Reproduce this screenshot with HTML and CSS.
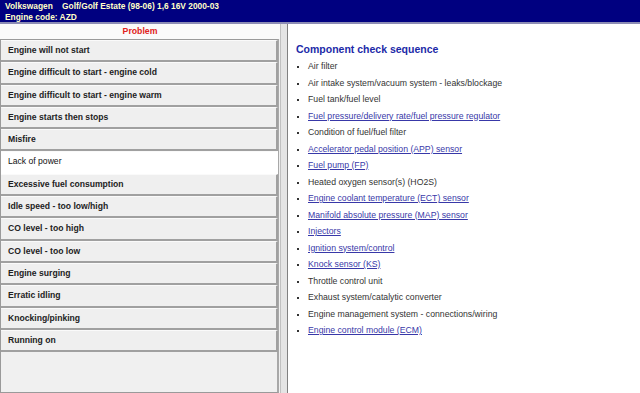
FILE: index.html
```html
<!DOCTYPE html>
<html lang="en">
<head>
  <meta charset="UTF-8">
  <title>Problem - Component check sequence</title>
  <link rel="stylesheet" href="styles.css">
</head>
<body>
  <div class="topo">
    <div>Volkswagen&nbsp;&nbsp;&nbsp; Golf/Golf Estate (98-06) 1,6 16V 2000-03</div>
    <div>Engine code: AZD</div>
  </div>
  <div class="conteudo">
    <div class="painel-esq">
      <div class="titulo-problema">Problem</div>
      <div class="lista-problemas">
        <div class="problema">Engine will not start</div>
        <div class="problema">Engine difficult to start - engine cold</div>
        <div class="problema">Engine difficult to start - engine warm</div>
        <div class="problema">Engine starts then stops</div>
        <div class="problema">Misfire</div>
        <div class="problema ativo">Lack of power</div>
        <div class="problema">Excessive fuel consumption</div>
        <div class="problema">Idle speed - too low/high</div>
        <div class="problema">CO level - too high</div>
        <div class="problema">CO level - too low</div>
        <div class="problema">Engine surging</div>
        <div class="problema">Erratic idling</div>
        <div class="problema">Knocking/pinking</div>
        <div class="problema">Running on</div>
      </div>
    </div>
    <div class="divisor"></div>
    <div class="painel-dir">
      <h2>Component check sequence</h2>
      <ul class="sequencia">
        <li>Air filter</li>
        <li>Air intake system/vacuum system - leaks/blockage</li>
        <li>Fuel tank/fuel level</li>
        <li><a href="#">Fuel pressure/delivery rate/fuel pressure regulator</a></li>
        <li>Condition of fuel/fuel filter</li>
        <li><a href="#">Accelerator pedal position (APP) sensor</a></li>
        <li><a href="#">Fuel pump (FP)</a></li>
        <li>Heated oxygen sensor(s) (HO2S)</li>
        <li><a href="#">Engine coolant temperature (ECT) sensor</a></li>
        <li><a href="#">Manifold absolute pressure (MAP) sensor</a></li>
        <li><a href="#">Injectors</a></li>
        <li><a href="#">Ignition system/control</a></li>
        <li><a href="#">Knock sensor (KS)</a></li>
        <li>Throttle control unit</li>
        <li>Exhaust system/catalytic converter</li>
        <li>Engine management system - connections/wiring</li>
        <li><a href="#">Engine control module (ECM)</a></li>
      </ul>
    </div>
  </div>
</body>
</html>
```
FILE: styles.css
```css
html, body {
  margin: 0;
  height: 100%;
  overflow: hidden;
}
body {
  font-family: "Liberation Sans", Arial, sans-serif;
  background-color: #fff;
  display: flex;
  flex-direction: column;
}
.topo {
  background-color: #000080;
  color: #ffffc8;
  font-weight: bold;
  font-size: 8.4px;
  line-height: 11px;
  padding: 1px 5px 0;
  box-sizing: border-box;
  border-bottom: 2px solid #8c8cb4;
  height: 24px;
}
.conteudo {
  flex: 1;
  display: flex;
  min-height: 0;
}
.painel-esq {
  width: 280px;
  background-color: #f0f0f0;
  display: flex;
  flex-direction: column;
}
.titulo-problema {
  color: #e02020;
  font-weight: bold;
  font-size: 8.7px;
  text-align: center;
  height: 15px;
  line-height: 14px;
  background-color: #fafafa;
}
.lista-problemas {
  flex: 1;
  border: 1px solid #9a9a9a;
  border-right: 2px solid #a8a8a8;
  margin-right: 1px;
}
.problema {
  height: 19.3px;
  line-height: 19px;
  padding-left: 7px;
  font-size: 8.6px;
  font-weight: bold;
  color: #222;
  background-color: #efefef;
  border-bottom: 2px solid #a0a0a0;
  border-right: 2px solid #a0a0a0;
  border-top: 1px solid #fafafa;
  margin-right: -1px;
}
.problema.ativo {
  background-color: #fff;
  font-weight: normal;
  color: #111;
  border-right-color: #fff;
  border-bottom-color: #fff;
}
.divisor {
  width: 6px;
  background-color: #e4e4e4;
  border-left: 1px solid #c0c0c0;
  border-right: 1px solid #808080;
}
.painel-dir {
  flex: 1;
  background-color: #fff;
  padding: 19px 0 0 8px;
}
.painel-dir h2 {
  margin: 0 0 4px;
  font-size: 10.5px;
  color: #1c2aa8;
}
.sequencia {
  margin: 0;
  padding: 0;
  list-style: none;
  font-size: 8.7px;
  color: #333;
}
.sequencia li {
  height: 16.5px;
  line-height: 14px;
  padding-left: 12px;
  position: relative;
}
.sequencia li::before {
  content: "";
  position: absolute;
  left: 1px;
  top: 7px;
  width: 2px;
  height: 2px;
  background-color: #333;
}
.sequencia a {
  color: #3838a8;
  text-decoration: underline;
}
```
